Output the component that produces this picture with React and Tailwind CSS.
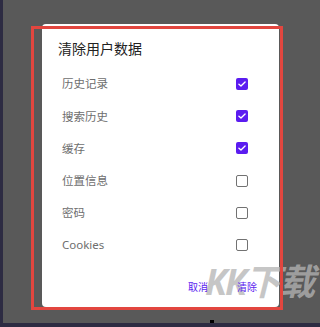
import React from "react";

const items = [
  { label: "历史记录", checked: true },
  { label: "搜索历史", checked: true },
  { label: "缓存", checked: true },
  { label: "位置信息", checked: false },
  { label: "密码", checked: false },
  { label: "Cookies", checked: false },
];

function Box({ checked }) {
  if (checked) {
    return (
      <div className="w-[12px] h-[12px] rounded-[2px] bg-[#5b1cf0] flex items-center justify-center">
        <svg viewBox="0 0 12 12" className="w-[10px] h-[10px]">
          <polyline points="2.3,6.2 4.8,8.5 9.7,3.6" fill="none" stroke="#fff" strokeWidth="1.6" strokeLinecap="round" strokeLinejoin="round" />
        </svg>
      </div>
    );
  }
  return <div className="w-[12px] h-[12px] rounded-[2px] border-[1.5px] border-[#727272]" />;
}

export default function App() {
  return (
    <div
      className="relative w-[320px] h-[327px] overflow-hidden bg-[#595959] border-l-[3px] border-b-[4px] border-[#2d2b42]"
      style={{ fontFamily: '"Noto Sans", "Noto Sans CJK SC", sans-serif' }}
    >
      <div className="ml-[39px] mt-[24px] w-[237px] h-[283px] bg-white rounded-[4px] pl-[16px] pr-[31px] pt-[16px] flex flex-col">
        <div className="text-[14px] leading-[18px] text-[#222]">清除用户数据</div>
        <div className="mt-[10px] flex flex-col">
          {items.map((it) => (
            <div key={it.label} className="h-[32.2px] flex items-center justify-between">
              <span className="pl-[4px] text-[11.5px] text-[#6e6e6e]">{it.label}</span>
              <Box checked={it.checked} />
            </div>
          ))}
        </div>
        <div className="relative z-10 mt-[16px] mr-[-9px] h-[20px] flex items-center justify-end gap-[29px] text-[10px] text-[#5b1cf0]">
          <span>取消</span>
          <span>清除</span>
        </div>
      </div>

      {/* watermark */}
      <div className="absolute left-[202px] top-[260px] text-[36px] leading-[44px] font-bold italic text-[#b4b4b4]/75 tracking-[-2px] pointer-events-none whitespace-nowrap">
        KK下载
      </div>

      {/* red annotation frame */}
      <div className="absolute left-[28px] top-[26px] w-[252px] h-[284px] border-[3px] border-[#e2463f] pointer-events-none" />

      <div className="absolute left-[207px] bottom-0 w-[4px] h-[3px] bg-black" />
    </div>
  );
}
